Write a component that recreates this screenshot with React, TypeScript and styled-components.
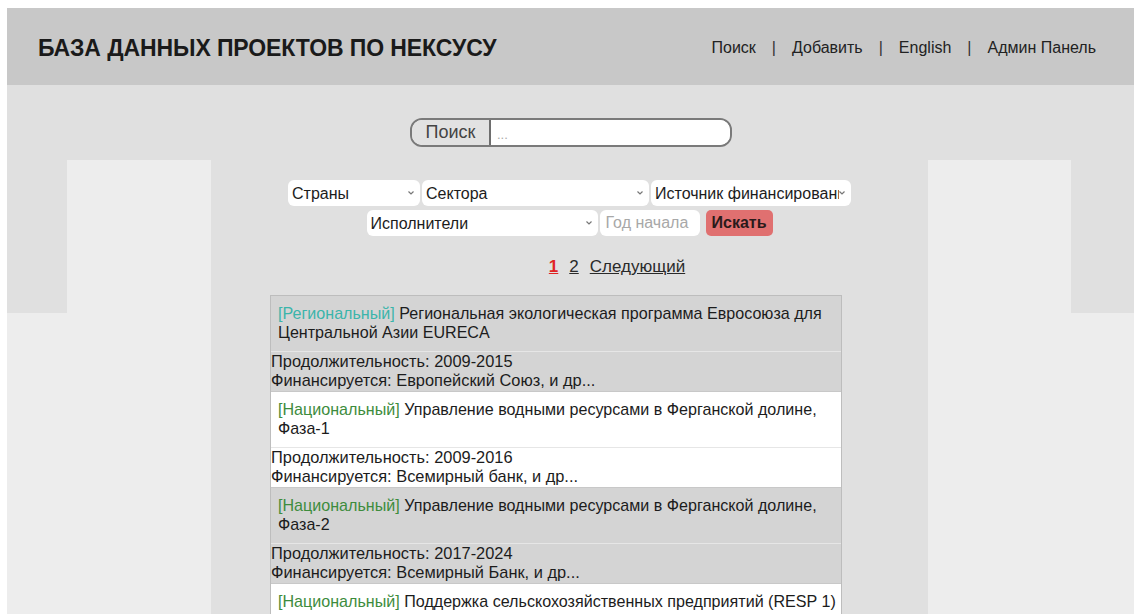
import React from "react";
import styled, { createGlobalStyle } from "styled-components";

const GlobalStyle = createGlobalStyle`
  html, body { margin: 0; padding: 0; background: #ffffff; }
  body {
    padding: 8px 0 0 7px;
    font-family: "Liberation Sans", Arial, Helvetica, sans-serif;
    color: #1c1c1c;
    overflow: hidden;
  }
  * { box-sizing: border-box; }
`;

const Header = styled.header`
  height: 77px;
  background: #c8c8c8;
  display: flex;
  align-items: center;
  justify-content: space-between;
  padding: 3px 38px 0 31px;
`;

const Title = styled.h1`
  margin: 0;
  font-size: 23px;
  font-weight: bold;
  color: #1a1a1a;
  letter-spacing: -0.1px;
`;

const Nav = styled.nav`
  display: flex;
  align-items: center;
  gap: 16px;
  font-size: 16px;
  color: #222;
`;

const NavLink = styled.a`
  color: #222;
  text-decoration: none;
`;

const Pipe = styled.span`
  color: #333;
`;

const Body = styled.div`
  display: grid;
  grid-template-columns: 60px 144px 717px 143px 1fr;
  min-height: 560px;
`;

const Side = styled.div`
  background: #ededed;
  display: flex;
  flex-direction: column;
`;

const SideCap = styled.div<{ $h: number }>`
  height: ${(p) => p.$h}px;
  background: #e0e0e0;
`;

const Center = styled.main`
  background: #e0e0e0;
  padding-top: 33px;
  display: flex;
  flex-direction: column;
`;

const SearchBar = styled.div`
  align-self: center;
  margin-left: 3px;
  width: 322px;
  height: 29px;
  border: 2px solid #7a7a7a;
  border-radius: 12px;
  display: flex;
  overflow: hidden;
  background: #fff;
`;

const SearchLabel = styled.span`
  width: 79px;
  background: #e2e2e2;
  border-right: 2px solid #6e6e6e;
  display: flex;
  align-items: center;
  justify-content: center;
  font-size: 18px;
  color: #444;
`;

const SearchInput = styled.input`
  flex: 1;
  border: none;
  outline: none;
  font-family: inherit;
  font-size: 13px;
  padding: 4px 6px 0;
  color: #333;
  &::placeholder { color: #aaa; }
`;

const FilterRow = styled.div<{ $top: number }>`
  display: flex;
  justify-content: center;
  gap: 2px;
  margin-top: ${(p) => p.$top}px;
`;

const SelectWrap = styled.div<{ $w: number }>`
  position: relative;
  width: ${(p) => p.$w}px;
  height: 26px;
`;

const Select = styled.select`
  appearance: none;
  -webkit-appearance: none;
  width: 100%;
  height: 100%;
  border: none;
  border-radius: 6px;
  background: #fff;
  font-family: inherit;
  font-size: 16px;
  color: #1c1c1c;
  padding: 0 12px 0 4px;
  outline: none;
`;

const Arrow = styled.svg`
  position: absolute;
  right: 6px;
  top: 11px;
  pointer-events: none;
`;

const YearInput = styled.input`
  width: 100px;
  height: 26px;
  border: none;
  border-radius: 6px;
  background: #fff;
  font-family: inherit;
  font-size: 16px;
  padding: 0 6px;
  outline: none;
  &::placeholder { color: #a8a8a8; }
`;

const SubmitButton = styled.button`
  margin-left: 4px;
  height: 26px;
  width: 67px;
  border: none;
  border-radius: 5px;
  background: #e07070;
  color: #2a1a1a;
  font-family: inherit;
  font-size: 16px;
  font-weight: bold;
  padding: 0;
`;

const Pager = styled.div`
  display: flex;
  justify-content: center;
  gap: 11px;
  margin-top: 21px;
  margin-left: 95px;
  font-size: 17px;
`;

const PageLink = styled.a<{ $active?: boolean }>`
  color: ${(p) => (p.$active ? "#e02424" : "#2a2a2a")};
  font-weight: ${(p) => (p.$active ? "bold" : "normal")};
  text-decoration: underline;
`;

const List = styled.ul`
  list-style: none;
  margin: 18px 0 0 59px;
  padding: 0;
  width: 572px;
  border: 1px solid #bdbdbd;
  border-bottom: none;
`;

const Item = styled.li<{ $shaded: boolean }>`
  background: ${(p) => (p.$shaded ? "#d4d4d4" : "#ffffff")};
`;

const ItemTitle = styled.div`
  padding: 8px 1px 9px 7px;
  font-size: 16.1px;
  line-height: 19px;
  border-bottom: 1px solid #e6e6e6;
`;

const Scope = styled.span<{ $kind: "regional" | "national" }>`
  color: ${(p) => (p.$kind === "regional" ? "#3bb5ab" : "#3d8c3d")};
`;

const ItemMeta = styled.div`
  font-size: 16.4px;
  line-height: 19px;
  padding-bottom: 1px;
  border-bottom: 1px solid #c8c8c8;
`;

type Project = {
  kind: "regional" | "national";
  label: string;
  name: string;
  years: string;
  funder: string;
};

const projects: Project[] = [
  {
    kind: "regional",
    label: "[Региональный]",
    name: "Региональная экологическая программа Евросоюза для Центральной Азии EURECA",
    years: "2009-2015",
    funder: "Европейский Союз, и др...",
  },
  {
    kind: "national",
    label: "[Национальный]",
    name: "Управление водными ресурсами в Ферганской долине, Фаза-1",
    years: "2009-2016",
    funder: "Всемирный банк, и др...",
  },
  {
    kind: "national",
    label: "[Национальный]",
    name: "Управление водными ресурсами в Ферганской долине, Фаза-2",
    years: "2017-2024",
    funder: "Всемирный Банк, и др...",
  },
  {
    kind: "national",
    label: "[Национальный]",
    name: "Поддержка сельскохозяйственных предприятий (RESP 1)",
    years: "2011-2018",
    funder: "Всемирный Банк, и др...",
  },
];

const Chevron = () => (
  <Arrow width="6" height="4" viewBox="0 0 6 4">
    <path d="M0.5 0.5 L3 3 L5.5 0.5" fill="none" stroke="#777" strokeWidth="1.2" />
  </Arrow>
);

const Dropdown = ({ w, label }: { w: number; label: string }) => (
  <SelectWrap $w={w}>
    <Select defaultValue="">
      <option value="">{label}</option>
    </Select>
    <Chevron />
  </SelectWrap>
);

export default function App() {
  return (
    <>
      <GlobalStyle />
      <Header>
        <Title>БАЗА ДАННЫХ ПРОЕКТОВ ПО НЕКСУСУ</Title>
        <Nav>
          <NavLink href="#">Поиск</NavLink>
          <Pipe>|</Pipe>
          <NavLink href="#">Добавить</NavLink>
          <Pipe>|</Pipe>
          <NavLink href="#">English</NavLink>
          <Pipe>|</Pipe>
          <NavLink href="#">Админ Панель</NavLink>
        </Nav>
      </Header>
      <Body>
        <Side>
          <SideCap $h={228} />
        </Side>
        <Side>
          <SideCap $h={75} />
        </Side>
        <Center>
          <SearchBar>
            <SearchLabel>Поиск</SearchLabel>
            <SearchInput placeholder="..." />
          </SearchBar>
          <FilterRow $top={33}>
            <Dropdown w={132} label="Страны" />
            <Dropdown w={227} label="Сектора" />
            <Dropdown w={200} label="Источник финансирования" />
          </FilterRow>
          <FilterRow $top={4}>
            <Dropdown w={231} label="Исполнители" />
            <YearInput placeholder="Год начала" />
            <SubmitButton>Искать</SubmitButton>
          </FilterRow>
          <Pager>
            <PageLink href="#" $active>1</PageLink>
            <PageLink href="#">2</PageLink>
            <PageLink href="#">Следующий</PageLink>
          </Pager>
          <List>
            {projects.map((p, i) => (
              <Item key={i} $shaded={i % 2 === 0}>
                <ItemTitle>
                  <Scope $kind={p.kind}>{p.label}</Scope> {p.name}
                </ItemTitle>
                <ItemMeta>
                  Продолжительность: {p.years}
                  <br />
                  Финансируется: {p.funder}
                </ItemMeta>
              </Item>
            ))}
          </List>
        </Center>
        <Side>
          <SideCap $h={75} />
        </Side>
        <Side>
          <SideCap $h={228} />
        </Side>
      </Body>
    </>
  );
}
